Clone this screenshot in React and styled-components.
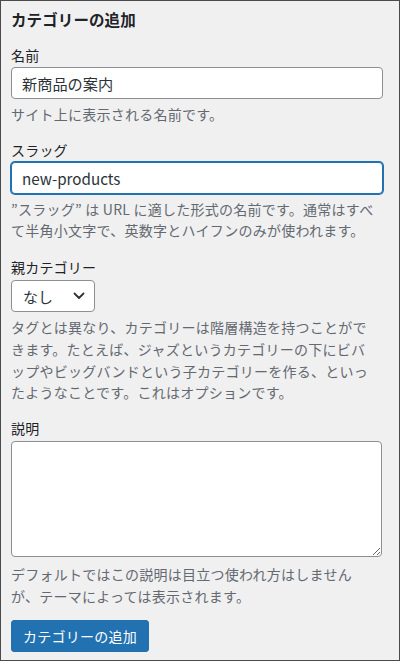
import React from 'react';
import styled, { createGlobalStyle } from 'styled-components';

const GlobalStyle = createGlobalStyle`
  html, body {
    margin: 0;
    padding: 0;
    background: #f0f0f1;
  }
  * {
    box-sizing: border-box;
  }
`;

const Panel = styled.div`
  width: 400px;
  height: 661px;
  border: 1px solid #4a4a4a;
  background: #f0f0f1;
  padding: 7px 10px 0 10px;
  font-family: 'Noto Sans CJK JP', 'Noto Sans', sans-serif;
  color: #1d2327;
  overflow: hidden;
`;

const Title = styled.h2`
  margin: 0;
  font-size: 15.5px;
  font-weight: 700;
  line-height: 22px;
  letter-spacing: 0.1px;
`;

const Field = styled.div`
  display: flex;
  flex-direction: column;
  align-items: flex-start;
  margin-top: ${(p) => p.$gap || 14}px;
`;

const Label = styled.label`
  font-size: 14px;
  line-height: 20px;
  letter-spacing: 0.2px;
  margin-bottom: ${(p) => p.$space || 2}px;
`;

const TextInput = styled.input`
  width: 372px;
  height: 32px;
  margin: 0;
  padding: 0 10px;
  font-family: inherit;
  font-size: 15.2px;
  color: #2c3338;
  background: #fff;
  border: 1px solid ${(p) => (p.$focused ? '#2271b1' : '#8c8f94')};
  border-radius: 4px;
  box-shadow: ${(p) => (p.$focused ? '0 0 0 1px #2271b1' : 'none')};
  outline: none;
`;

const TextArea = styled.textarea`
  width: 371px;
  height: 116px;
  margin: 0;
  padding: 6px 8px;
  font-family: inherit;
  font-size: 14px;
  background: #fff;
  border: 1px solid #8c8f94;
  border-radius: 4px;
  outline: none;
`;

const SelectBox = styled.div`
  width: 84px;
  height: 32px;
  display: flex;
  align-items: center;
  justify-content: space-between;
  padding: 0 9px 0 11px;
  background: #fff;
  border: 1px solid #8c8f94;
  border-radius: 4px;
  font-size: 15px;
  color: #2c3338;
`;

const Help = styled.p`
  margin: ${(p) => p.$top || 5}px 0 0 0;
  font-size: 14px;
  line-height: 21.7px;
  letter-spacing: 0.25px;
  color: #646970;
  white-space: nowrap;
`;

const Button = styled.button`
  margin-top: 13px;
  height: 32px;
  padding: 0 11px;
  font-family: inherit;
  font-size: 14px;
  letter-spacing: 0.25px;
  color: #fff;
  background: #2271b1;
  border: 1px solid #2271b1;
  border-radius: 3px;
  cursor: pointer;
`;

const Chevron = () => (
  <svg width="12" height="8" viewBox="0 0 12 8" fill="none">
    <polyline
      points="1.5,1.5 6,6 10.5,1.5"
      stroke="#2c3338"
      strokeWidth="1.8"
      strokeLinecap="round"
      strokeLinejoin="round"
    />
  </svg>
);

export default function App() {
  return (
    <>
      <GlobalStyle />
      <Panel>
        <Title>カテゴリーの追加</Title>

        <Field $gap={15}>
          <Label>名前</Label>
          <TextInput defaultValue="新商品の案内" />
          <Help>サイト上に表示される名前です。</Help>
        </Field>

        <Field $gap={14}>
          <Label>スラッグ</Label>
          <TextInput $focused defaultValue="new-products" />
          <Help>
            ”スラッグ” は URL に適した形式の名前です。通常はすべ
            <br />
            て半角小文字で、英数字とハイフンのみが使われます。
          </Help>
        </Field>

        <Field $gap={15}>
          <Label $space={3}>親カテゴリー</Label>
          <SelectBox>
            <span>なし</span>
            <Chevron />
          </SelectBox>
          <Help>
            タグとは異なり、カテゴリーは階層構造を持つことがで
            <br />
            きます。たとえば、ジャズというカテゴリーの下にビバ
            <br />
            ップやビッグバンドという子カテゴリーを作る、といっ
            <br />
            たようなことです。これはオプションです。
          </Help>
        </Field>

        <Field $gap={14}>
          <Label $space={3}>説明</Label>
          <TextArea />
          <Help $top={7}>
            デフォルトではこの説明は目立つ使われ方はしません
            <br />
            が、テーマによっては表示されます。
          </Help>
          <Button>カテゴリーの追加</Button>
        </Field>
      </Panel>
    </>
  );
}
